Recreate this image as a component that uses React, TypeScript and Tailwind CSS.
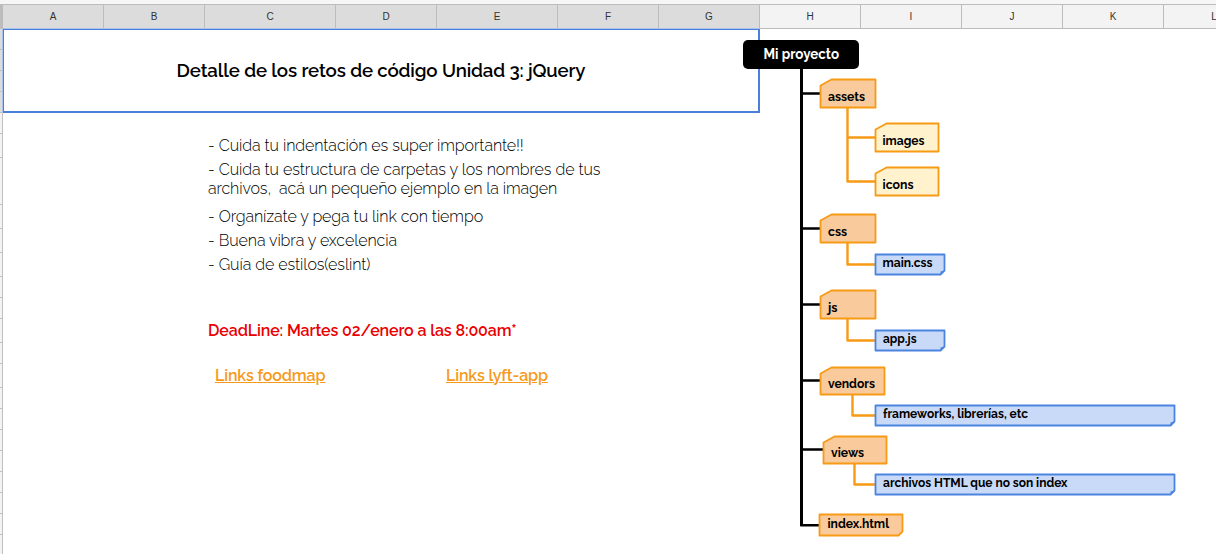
const columns = [
  { name: "A", width: "w-[101px]", selected: true },
  { name: "B", width: "w-[101px]", selected: true },
  { name: "C", width: "w-[131px]", selected: true },
  { name: "D", width: "w-[101px]", selected: true },
  { name: "E", width: "w-[121px]", selected: true },
  { name: "F", width: "w-[101px]", selected: true },
  { name: "G", width: "w-[101px]", selected: true },
  { name: "H", width: "w-[101px]", selected: false },
  { name: "I", width: "w-[101px]", selected: false },
  { name: "J", width: "w-[101px]", selected: false },
  { name: "K", width: "w-[101px]", selected: false },
  { name: "L", width: "w-[101px]", selected: false },
];

const rowHeights = [21, 21, 21, 21, 21, 24, 47, 24, 24, 24, 21, 21, 24, 21, 24, 21, 21, 21, 21, 21, 21, 21, 21];

const ORANGE = "#f79a14";
const BLUE = "#4a84e0";

type Node = {
  label: string;
  x: number;
  y: number;
  w: number;
  h: number;
  kind: "folder" | "subfolder" | "file" | "page";
  textX: number;
  baseline: number;
  textWidth: number;
};

const nodes: Node[] = [
  { label: "assets", x: 820.5, y: 79.5, w: 55, h: 28, kind: "folder", textX: 828, baseline: 101, textWidth: 37 },
  { label: "images", x: 875.5, y: 123.5, w: 63, h: 28, kind: "subfolder", textX: 882.5, baseline: 145, textWidth: 42 },
  { label: "icons", x: 875.5, y: 167.5, w: 63, h: 28, kind: "subfolder", textX: 882.5, baseline: 189, textWidth: 31 },
  { label: "css", x: 820.5, y: 214.5, w: 55, h: 28, kind: "folder", textX: 828, baseline: 236, textWidth: 19 },
  { label: "main.css", x: 875.5, y: 254.5, w: 69, h: 20, kind: "file", textX: 882.5, baseline: 267, textWidth: 50 },
  { label: "js", x: 820.5, y: 290.5, w: 55, h: 28, kind: "folder", textX: 828, baseline: 312, textWidth: 9.5 },
  { label: "app.js", x: 875.5, y: 330.5, w: 69, h: 20, kind: "file", textX: 883, baseline: 343, textWidth: 33.5 },
  { label: "vendors", x: 820.5, y: 367.5, w: 64, h: 27, kind: "folder", textX: 828, baseline: 388, textWidth: 47 },
  { label: "frameworks, librerías, etc", x: 875.5, y: 405.5, w: 299, h: 20, kind: "file", textX: 883, baseline: 418, textWidth: 145 },
  { label: "views", x: 823.5, y: 436.5, w: 63, h: 27, kind: "folder", textX: 831, baseline: 457, textWidth: 33 },
  { label: "archivos HTML que no son index", x: 875.5, y: 474.5, w: 299, h: 20, kind: "file", textX: 883, baseline: 487, textWidth: 184.5 },
  { label: "index.html", x: 819.5, y: 514.5, w: 83, h: 21, kind: "page", textX: 827.5, baseline: 528, textWidth: 61.5 },
];

const fills = { folder: "#f9cb9c", subfolder: "#fff2cc", file: "#c9daf8", page: "#f9cb9c" };

function outline({ x, y, w, h, kind }: Node) {
  if (kind === "folder" || kind === "subfolder") {
    return `M${x} ${y + 6}L${x + 11} ${y}H${x + w}V${y + h}H${x}Z`;
  }
  return `M${x} ${y}H${x + w}V${y + h - 4}L${x + w - 4} ${y + h}H${x}Z`;
}

function ProjectTree() {
  return (
    <svg className="absolute left-0 top-0" width="1216" height="554" viewBox="0 0 1216 554" fontFamily="Raleway, Lato, sans-serif">
      <g fill="none" stroke="#000" strokeWidth="2.4">
        <path d="M801.5 66V526" strokeWidth="3" />
        <path d="M801.5 93.5H820M801.5 228.5H820M801.5 304.5H820M801.5 380.5H820M801.5 449.5H823M800.3 525.3H819" />
      </g>
      <path
        d="M847.5 107V181.5H875M847.5 137.5H875M847.5 242V264.5H875M847.5 318V340.5H875M852.5 394V415.5H875M854.5 463V484.5H875"
        fill="none"
        stroke={ORANGE}
        strokeWidth="2.4"
        strokeLinejoin="round"
      />
      {nodes.map((n) => (
        <g key={n.label}>
          <path d={outline(n)} fill={fills[n.kind]} stroke={n.kind === "file" ? BLUE : ORANGE} strokeWidth="1.8" strokeLinejoin="round" />
          {n.kind === "file" && (
            <path d={`M${n.x + n.w} ${n.y + n.h - 4}L${n.x + n.w - 4} ${n.y + n.h}V${n.y + n.h - 3}Z`} fill={BLUE} />
          )}
          <text x={n.textX} y={n.baseline} fontSize="12" fontWeight="700" textLength={n.textWidth} lengthAdjust="spacingAndGlyphs">
            {n.label}
          </text>
        </g>
      ))}
      <rect x="743" y="40" width="116" height="29" rx="5" />
      <text x="763.5" y="59" fill="#fff" fontSize="14" fontWeight="700" textLength="75.5" lengthAdjust="spacingAndGlyphs">
        Mi proyecto
      </text>
    </svg>
  );
}

export default function App() {
  return (
    <div className="relative flex h-[554px] w-[1216px] flex-col overflow-hidden bg-white font-[Raleway,Lato,sans-serif] text-black">
      <div className="h-1 shrink-0 bg-[#f6f6f6]" />
      <div className="flex h-[25px] shrink-0 border-t border-[#bcbcbc] font-['Liberation_Sans',sans-serif] text-[10px] text-[#333]">
        <div className="w-[3px] shrink-0 bg-[#bcbcbc]" />
        {columns.map((c) => (
          <div
            key={c.name}
            className={`flex shrink-0 items-center justify-center border-b border-r border-r-[#bcbcbc] ${c.width} ${c.selected ? "border-b-[#a9c3ee] bg-[#dcdcdc]" : "border-b-[#bcbcbc] bg-[#f3f3f3]"}`}
          >
            {c.name}
          </div>
        ))}
      </div>
      <div className="flex flex-1">
        <div className="w-[3px] shrink-0">
          {rowHeights.map((h, i) => (
            <div
              key={i}
              className={`border-b border-r ${i < 4 ? "border-b-[#c0c0c0] border-r-[#a9c3ee] bg-[#dcdcdc]" : "border-[#c0c0c0] bg-[#f3f3f3]"}`}
              style={{ height: h }}
            />
          ))}
        </div>
        <div className="flex w-[757px] flex-col">
          <div className="flex h-[84px] items-center justify-center border-2 border-l border-t border-[#4a80da] pb-px text-[18.67px] font-semibold tracking-[-0.135px]">
            <span className="whitespace-nowrap">Detalle de los retos de código Unidad 3: jQuery</span>
          </div>
          <div className="flex flex-col pl-[205px] pt-5 text-base font-light leading-[19px] tracking-[-0.08px]">
            <p className="flex h-6 items-center">- Cuida tu indentación es super importante!!</p>
            <p className="flex h-[47px] flex-col whitespace-pre pt-[3px]">
              <span>- Cuida tu estructura de carpetas y los nombres de tus</span>
              <span className="tracking-[-0.11px]">archivos,  acá un pequeño ejemplo en la imagen</span>
            </p>
            <p className="flex h-6 items-center">- Organízate y pega tu link con tiempo</p>
            <p className="flex h-6 items-center">- Buena vibra y excelencia</p>
            <p className="flex h-6 items-center">- Guía de estilos(eslint)</p>
            <p className="mt-[42px] flex h-6 items-center font-semibold tracking-[-0.11px] text-[#ea0000]">DeadLine: Martes 02/enero a las 8:00am*</p>
            <div className="mt-[21px] flex h-6 items-center font-semibold tracking-[-0.15px] text-[#f59a1a] underline">
              <div className="w-[231px] pl-[7px]">
                <a>Links foodmap</a>
              </div>
              <div className="pl-[7px]">
                <a>Links lyft-app</a>
              </div>
            </div>
          </div>
        </div>
      </div>
      <ProjectTree />
    </div>
  );
}
